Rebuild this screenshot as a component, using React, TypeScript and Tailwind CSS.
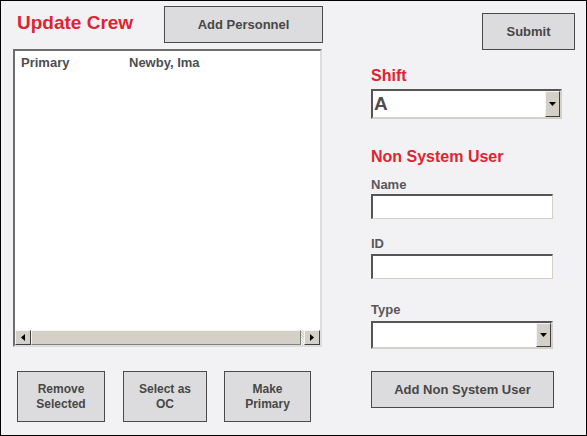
import React from "react";

const btn =
  "border border-[#4a4a4a] bg-[#dcdcde] text-[#474747] font-bold flex items-center justify-center text-center";

function DropBtn({ h }: { h: string }) {
  return (
    <div
      className={`w-[15px] ${h} bg-[#d4d0c8] border-t border-l border-t-[#f4f4f4] border-l-[#f4f4f4] border-r border-b border-r-[#404040] border-b-[#404040] flex items-center justify-center`}
    >
      <svg width="7" height="4" viewBox="0 0 7 4">
        <path d="M0 0H7L3.5 4Z" fill="#000" />
      </svg>
    </div>
  );
}

function ArrowBtn({ dir }: { dir: "left" | "right" }) {
  return (
    <div className="w-[16px] h-[15px] bg-[#d4d0c8] border-t border-l border-t-[#f4f4f4] border-l-[#f4f4f4] border-r border-b border-r-[#404040] border-b-[#404040] flex items-center justify-center">
      <svg width="4" height="7" viewBox="0 0 4 7">
        {dir === "left" ? (
          <path d="M4 0V7L0 3.5Z" fill="#000" />
        ) : (
          <path d="M0 0V7L4 3.5Z" fill="#000" />
        )}
      </svg>
    </div>
  );
}

export default function App() {
  return (
    <div className="w-[587px] h-[436px] border border-black bg-[#f2f2f4] flex font-['Liberation_Sans',Arial,sans-serif] overflow-hidden">
      {/* Left column */}
      <div className="w-[322px] shrink-0 flex flex-col pl-[12px]">
        <div className="flex items-start mt-[5px] h-[37px]">
          <h1 className="ml-[4px] mt-[6px] text-[19px] leading-[22px] font-bold text-[#de2332]">
            Update Crew
          </h1>
          <button className={`${btn} ml-auto w-[159px] h-[37px] text-[13px] leading-[15px]`}>
            Add Personnel
          </button>
        </div>

        <div className="mt-[6px] w-[309px] h-[298px] bg-white border-2 border-t-[#6e6e6e] border-l-[#6e6e6e] border-r-[#dcdcdc] border-b-[#dcdcdc] flex flex-col">
          <div className="flex-1 pt-[4px] pl-[6px]">
            <div className="flex text-[13px] leading-[15px] font-bold text-[#4e4e52]">
              <span className="w-[108px]">Primary</span>
              <span>Newby, Ima</span>
            </div>
          </div>
          <div className="flex h-[15px]">
            <ArrowBtn dir="left" />
            <div className="flex-1 h-[15px] bg-[#d4d0c8] border-t border-l border-t-[#f4f4f4] border-l-[#f4f4f4] border-r border-b border-r-[#808080] border-b-[#808080]" />
            <div className="w-[3px] h-[15px] bg-[repeating-linear-gradient(45deg,#f4f4f4_0px,#f4f4f4_1px,#d4d0c8_1px,#d4d0c8_2px)]" />
            <ArrowBtn dir="right" />
          </div>
        </div>

        <div className="mt-[24px] flex h-[51px] text-[12px] leading-[15px]">
          <button className={`${btn} ml-[4px] w-[88px] h-[51px]`}>
            Remove
            <br />
            Selected
          </button>
          <button className={`${btn} ml-[18px] w-[84px] h-[51px]`}>
            Select as
            <br />
            OC
          </button>
          <button className={`${btn} ml-[17px] w-[87px] h-[51px]`}>
            Make
            <br />
            Primary
          </button>
        </div>
      </div>

      {/* Right column */}
      <div className="flex-1 flex flex-col pl-[48px] pr-[11px]">
        <button className={`${btn} self-end mt-[12px] w-[93px] h-[37px] text-[13px] leading-[15px]`}>
          Submit
        </button>

        <div className="mt-[17px] text-[16px] leading-[18px] font-bold text-[#de2332]">Shift</div>
        <div className="mt-[4px] w-[191px] h-[30px] bg-white border-2 border-t-[#555] border-l-[#555] border-r-[#d4d0c8] border-b-[#d4d0c8] flex items-center">
          <span className="flex-1 pl-[1px] text-[19px] leading-[22px] font-bold text-[#4e4e52]">A</span>
          <DropBtn h="h-[26px]" />
        </div>

        <div className="mt-[29px] text-[16px] leading-[18px] font-bold text-[#de2332]">Non System User</div>

        <div className="mt-[11px] text-[13px] leading-[15px] font-bold text-[#58585c]">Name</div>
        <div className="mt-[2px] w-[182px] h-[25px] bg-white border-t-2 border-l-2 border-t-[#555] border-l-[#555] border-r border-b border-r-[#d4d0c8] border-b-[#d4d0c8]" />

        <div className="mt-[17px] text-[13px] leading-[15px] font-bold text-[#58585c]">ID</div>
        <div className="mt-[3px] w-[182px] h-[25px] bg-white border-t-2 border-l-2 border-t-[#555] border-l-[#555] border-r border-b border-r-[#d4d0c8] border-b-[#d4d0c8]" />

        <div className="mt-[23px] text-[13px] leading-[15px] font-bold text-[#58585c]">Type</div>
        <div className="mt-[4px] w-[182px] h-[28px] bg-white border-2 border-t-[#555] border-l-[#555] border-r-[#d4d0c8] border-b-[#d4d0c8] flex items-center justify-end">
          <DropBtn h="h-[24px]" />
        </div>

        <button className={`${btn} mt-[22px] w-[183px] h-[37px] text-[13px] leading-[15px]`}>
          Add Non System User
        </button>
      </div>
    </div>
  );
}
